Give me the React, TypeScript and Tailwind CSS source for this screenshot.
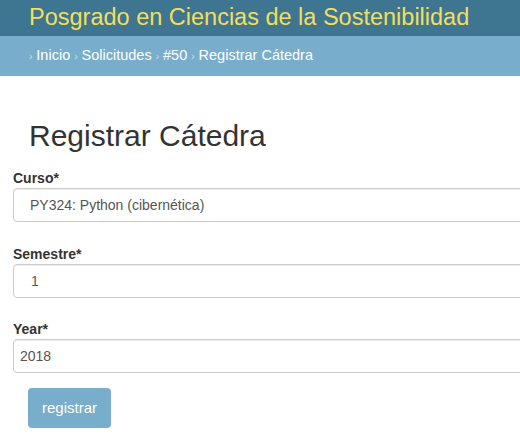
export default function App() {
  return (
    <div className="min-h-[443px] bg-white font-['Liberation_Sans',Arial,sans-serif] text-[#333] overflow-hidden">
      {/* Cabecera */}
      <header className="h-[36px] bg-[#3e7591] pl-[29px] flex items-center">
        <h1 className="text-[23.5px] leading-none text-[#f3df5c] whitespace-nowrap mt-[-1px]">
          Posgrado en Ciencias de la Sostenibilidad
        </h1>
      </header>

      {/* Migas */}
      <nav className="h-[40px] bg-[#78aecb] pl-[29px] flex items-center text-[14.5px] text-white whitespace-nowrap">
        <span className="text-[10px] text-[#cfe2ec] mr-[4px]">›</span>
        <span>Inicio</span>
        <span className="text-[10px] text-[#cfe2ec] mx-[4px]">›</span>
        <span>Solicitudes</span>
        <span className="text-[10px] text-[#cfe2ec] mx-[4px]">›</span>
        <span>#50</span>
        <span className="text-[10px] text-[#cfe2ec] mx-[4px]">›</span>
        <span>Registrar Cátedra</span>
      </nav>

      <main className="pl-[13px]">
        <h2 className="text-[30px] leading-none pl-[16px] pt-[45px] text-[#333]">Registrar Cátedra</h2>

        <form className="mt-[17px]">
          <div>
            <label className="block text-[14px] font-bold leading-[20px]">Curso*</label>
            <div className="h-[34px] w-[520px] border border-[#ccc] rounded-[4px] flex items-center pl-[16px] text-[14px] text-[#555] shadow-[inset_0_1px_1px_rgba(0,0,0,0.075)]">
              PY324: Python (cibernética)
            </div>
          </div>

          <div className="mt-[22px]">
            <label className="block text-[14px] font-bold leading-[20px]">Semestre*</label>
            <div className="h-[34px] w-[520px] border border-[#ccc] rounded-[4px] flex items-center pl-[17px] text-[14px] text-[#555] shadow-[inset_0_1px_1px_rgba(0,0,0,0.075)]">
              1
            </div>
          </div>

          <div className="mt-[21px]">
            <label className="block text-[14px] font-bold leading-[20px]">Year*</label>
            <div className="h-[34px] w-[520px] border border-[#ccc] rounded-[4px] flex items-center pl-[6px] text-[14px] text-[#555] shadow-[inset_0_1px_1px_rgba(0,0,0,0.075)]">
              2018
            </div>
          </div>

          <div className="pl-[15px] mt-[15px]">
            <button type="button" className="h-[40px] w-[83px] bg-[#78aecb] rounded-[4px] text-white text-[15px]">
              registrar
            </button>
          </div>
        </form>
      </main>
    </div>
  );
}
